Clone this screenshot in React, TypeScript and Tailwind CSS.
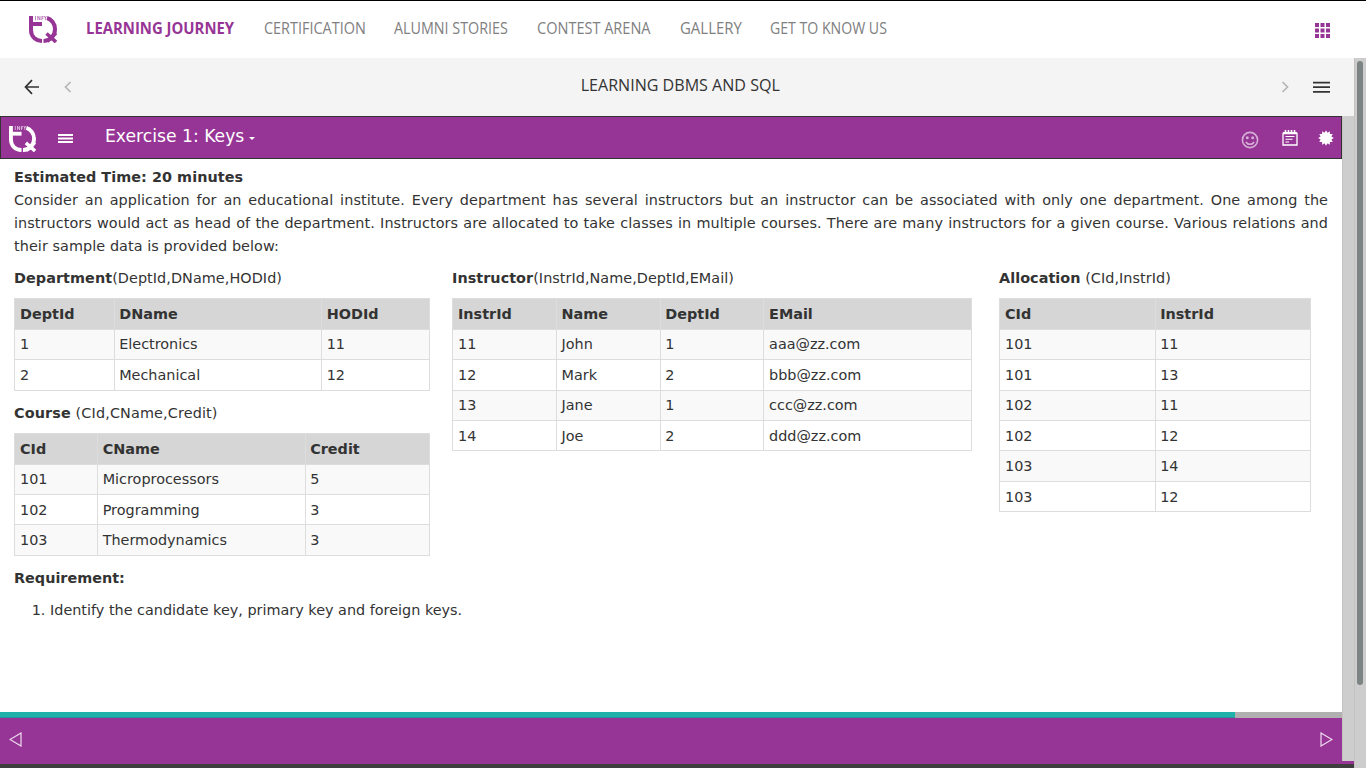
import React from "react";

type TableProps = { head: string[]; rows: string[][]; widths: number[] };

function DataTable({ head, rows, widths }: TableProps) {
  const total = widths.reduce((a, b) => a + b, 0);
  return (
    <table className="table-fixed border-collapse border border-[#ddd] text-left" style={{ width: total + 1 }}>
      <colgroup>
        {widths.map((w, i) => (
          <col key={i} style={{ width: w }} />
        ))}
      </colgroup>
      <thead>
        <tr className="h-[30.4px] bg-[#d6d6d6]">
          {head.map((h) => (
            <th key={h} className="border border-[#ddd] py-0 pt-[1.2px] pr-0 pl-[4.7px] leading-[19.5px] font-bold first:pl-[5px]">{h}</th>
          ))}
        </tr>
      </thead>
      <tbody>
        {rows.map((r, i) => (
          <tr key={i} className="h-[30.4px] odd:bg-[#f9f9f9] even:[&>td]:pt-[2px]">
            {r.map((c, j) => (
              <td key={j} className="border border-[#ddd] py-0 pt-[1.1px] pr-0 pl-[4.7px] leading-[19.5px] first:pl-[5px]">{c}</td>
            ))}
          </tr>
        ))}
      </tbody>
    </table>
  );
}

function Logo({ className }: { className: string }) {
  return (
    <svg viewBox="0 0 28 27" className={className} fill="none" stroke="currentColor">
      <path d="M2 0V14C2 20.5 6.5 24.8 13 24.9" strokeWidth="4" />
      <path d="M2 8H13" strokeWidth="4" />
      <path d="M18 2C22.5 3.2 26 7.8 26 13C26 19.5 21.5 25 14.5 24.9" strokeWidth="4" />
      <path d="M17.5 17.5L27 26M27 17L18 25.5" strokeWidth="3.6" />
      <path d="M6.5 0V4.2M8.8 4.2V.2L11 4V0M12.9 4.2V.4H14.7M12.9 2.1H14.5M15.4 0L16.4 2V4.2M17.4 0L16.4 2" strokeWidth="0.6" />
    </svg>
  );
}

const nav: [string, string, string][] = [
  ["CERTIFICATION", "w-[130px]", "scale-x-[0.931]"],
  ["ALUMNI STORIES", "w-[143px]", "scale-x-[0.923]"],
  ["CONTEST ARENA", "w-[143px]", "scale-x-[0.937]"],
  ["GALLERY", "w-[90px]", "scale-x-[0.965]"],
  ["GET TO KNOW US", "w-[130px]", "scale-x-[0.91]"],
];

export default function App() {
  return (
    <div className="flex h-[768px] w-[1366px] flex-col overflow-hidden bg-white font-['DejaVu_Sans',sans-serif] text-[14.4px] text-[#333]">
      <header className="flex h-[58px] shrink-0 items-center border-t border-black bg-white pr-9 pl-[29px] font-['Open_Sans',sans-serif] text-[15.5px] text-[#808080]">
        <Logo className="h-[27px] w-7 text-[#963596]" />
        <nav className="ml-[29px] flex pb-[2px] whitespace-nowrap">
          <span className="w-[178px] origin-left scale-x-[0.96] font-bold text-[#963596]">LEARNING JOURNEY</span>
          {nav.map(([label, w, scale]) => (
            <span key={label} className={`origin-left ${w} ${scale}`}>{label}</span>
          ))}
        </nav>
        <svg viewBox="0 0 15 15" className="mt-[2px] ml-auto h-[15px] w-[15px] fill-[#963596]">
          {[0, 5.5, 11].map((y) => [0, 5.5, 11].map((x) => <rect key={x + "-" + y} x={x} y={y} width="4" height="4" />))}
        </svg>
      </header>

      <div className="flex min-h-0 flex-1">
        <div className="flex w-[1354px] flex-col">
          <div className="flex h-[58px] shrink-0 items-center bg-[#f4f4f4] pr-6 pl-6 font-['Open_Sans',sans-serif] text-[#333]">
            <svg viewBox="0 0 16 16" className="h-4 w-4" fill="none" stroke="currentColor" strokeWidth="1.7"><path d="M15 8H2M8 1.2L1.5 8L8 14.8" /></svg>
            <svg viewBox="0 0 8 12" className="ml-6 h-3 w-2" fill="none" stroke="#b5b5b5" strokeWidth="1.7"><path d="M6.5 1L1.5 6L6.5 11" /></svg>
            <div className="flex-1 scale-x-[0.945] pb-1 pl-2 text-center text-[17px]">LEARNING DBMS AND SQL</div>
            <svg viewBox="0 0 8 12" className="mr-6 h-3 w-2" fill="none" stroke="#b5b5b5" strokeWidth="1.7"><path d="M1.5 1L6.5 6L1.5 11" /></svg>
            <svg viewBox="0 0 17 12" className="h-3 w-[17px]" fill="none" stroke="currentColor" strokeWidth="1.8"><path d="M0 1.7H17M0 6.2H17M0 10.8H17" /></svg>
          </div>

          <div className="flex min-h-0 flex-1 bg-[#cdcdcd]">
            <div className="flex w-[1342px] flex-col bg-white">
              <div className="flex h-[43px] shrink-0 items-center border border-[#333] bg-[#963596] pr-[7px] pl-2 text-white">
                <Logo className="mt-[2px] h-[26px] w-[27px]" />
                <svg viewBox="0 0 15 9" className="mt-px ml-[22px] h-[9px] w-[15px]" stroke="currentColor" strokeWidth="2"><path d="M0 1H15M0 4.5H15M0 8H15" /></svg>
                <span className="ml-8 pb-[2px] text-[17.2px]">Exercise 1: Keys</span>
                <svg viewBox="0 0 6 3" className="mt-px ml-[5px] h-[3px] w-[6px]" fill="currentColor"><path d="M0 0H6L3 3Z" /></svg>
                <svg viewBox="0 0 18 18" className="mt-1 ml-auto h-[18px] w-[18px] opacity-60" fill="none" stroke="white" strokeWidth="1.6"><circle cx="9" cy="9" r="7.6" /><path d="M5 10.8C6.5 14 11.5 14 13 10.8" /><circle cx="6.3" cy="6.8" r=".7" fill="white" /><circle cx="11.7" cy="6.8" r=".7" fill="white" /></svg>
                <svg viewBox="0 0 16 16" className="mt-px ml-[23px] h-4 w-4" fill="none" stroke="white"><path d="M1 3.5H15V15H1Z" strokeWidth="1.3" /><path d="M1 3H15" strokeWidth="2" /><path d="M3.5 0V3M6.5 0V3M9.5 0V3M12.5 0V3" strokeWidth="1.6" /><path d="M3.5 6.5H12.5M3.5 9.2H10.5M3.5 12H7" strokeWidth="1.1" /></svg>
                <svg viewBox="-8 -8 16 16" className="mt-px ml-5 h-4 w-4" fill="currentColor">
                  {Array.from({ length: 12 }, (_, i) => <path key={i} d="M-1.9-4.5L0-7.8L1.9-4.5Z" transform={`rotate(${i * 30})`} />)}
                  <circle r="5.4" />
                </svg>
              </div>

              <main className="flex-1 px-[14px] pt-[7px] leading-[23px]">
                <h1 className="font-bold tracking-[0.05px]">Estimated Time: 20 minutes</h1>
                <p className="text-justify tracking-[0.07px]">
                  Consider an application for an educational institute. Every department has several instructors but an instructor can be associated with only one department. One among the instructors would act as head of the department. Instructors are allocated to take classes in multiple courses. There are many instructors for a given course. Various relations and their sample data is provided below:
                </p>
                <div className="mt-[9px] flex">
                  <section className="w-[438px]">
                    <p className="mb-[8.4px] tracking-[0.06px]"><b>Department</b>(DeptId,DName,HODId)</p>
                    <DataTable head={["DeptId", "DName", "HODId"]} widths={[99.5, 207.5, 108]} rows={[["1", "Electronics", "11"], ["2", "Mechanical", "12"]]} />
                    <p className="mt-[11px] mb-[8.6px] tracking-[0.13px]"><b>Course</b> (CId,CName,Credit)</p>
                    <DataTable head={["CId", "CName", "Credit"]} widths={[83, 207.5, 124.5]} rows={[["101", "Microprocessors", "5"], ["102", "Programming", "3"], ["103", "Thermodynamics", "3"]]} />
                  </section>
                  <section className="w-[547px]">
                    <p className="mb-[8.4px] tracking-[0.04px]"><b>Instructor</b>(InstrId,Name,DeptId,EMail)</p>
                    <DataTable head={["InstrId", "Name", "DeptId", "EMail"]} widths={[103.8, 103.8, 103.8, 207.6]} rows={[["11", "John", "1", "aaa@zz.com"], ["12", "Mark", "2", "bbb@zz.com"], ["13", "Jane", "1", "ccc@zz.com"], ["14", "Joe", "2", "ddd@zz.com"]]} />
                  </section>
                  <section>
                    <p className="mb-[8.4px] tracking-[0.05px]"><b>Allocation</b> (CId,InstrId)</p>
                    <DataTable head={["CId", "InstrId"]} widths={[155.5, 155.5]} rows={[["101", "11"], ["101", "13"], ["102", "11"], ["102", "12"], ["103", "14"], ["103", "12"]]} />
                  </section>
                </div>
                <p className="mt-[11.3px] font-bold">Requirement:</p>
                <ol className="mt-[9px] list-decimal pl-9"><li>Identify the candidate key, primary key and foreign keys.</li></ol>
              </main>

              <div className="flex h-[6px] shrink-0 bg-[#b0b0b0]"><div className="w-[1235px] border-b border-[#2b8f9c] bg-[#20b2aa]" /></div>
              <footer className="flex h-[43px] shrink-0 items-center justify-between bg-[#963596] px-[9px] text-[#efdcef]">
                <svg viewBox="0 0 13 15" className="h-[15px] w-[13px]" fill="none" stroke="currentColor" strokeWidth="1.2"><path d="M12 1V14L1 7.5Z" /></svg>
                <svg viewBox="0 0 13 15" className="h-[15px] w-[13px]" fill="none" stroke="currentColor" strokeWidth="1.2"><path d="M1 1V14L12 7.5Z" /></svg>
              </footer>
            </div>
            <div className="flex-1 border-l border-[#c6c2bf]" />
          </div>
          <div className="h-[3px] shrink-0 bg-[#963596]" />
          <div className="h-1 shrink-0 bg-[#3e3e3e]" />
        </div>
        <div className="w-3 border-l border-[#c6c2bf] bg-[#cdcdcd] pt-[3px] pl-[2px]"><div className="h-[624px] w-[6px] rounded-full bg-[#7d8282]" /></div>
      </div>
    </div>
  );
}
